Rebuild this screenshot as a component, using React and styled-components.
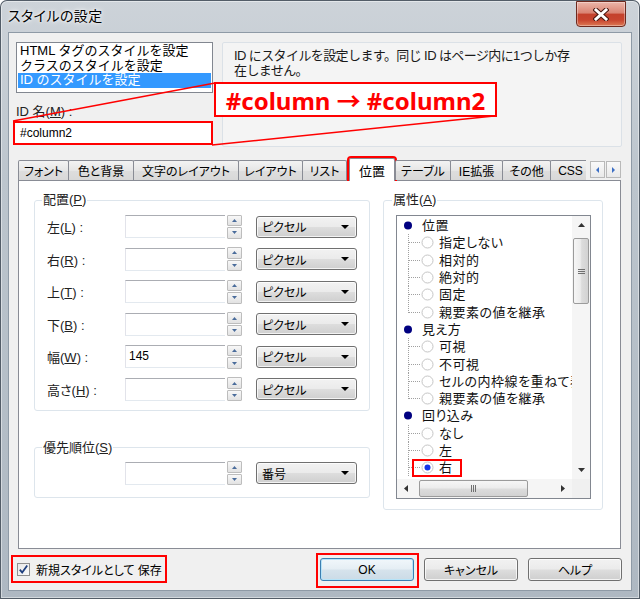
import React from 'react';
import styled, { createGlobalStyle, css } from 'styled-components';

const GlobalStyle = createGlobalStyle`
  html, body {
    margin: 0;
    padding: 0;
    background: #ffffff;
  }
  body {
    font-family: "Liberation Sans", "Noto Sans CJK JP", sans-serif;
    font-size: 12px;
    color: #000;
    font-feature-settings: "palt";
  }
  *, *::before, *::after {
    box-sizing: border-box;
  }
`;

const buttonFace = css`
  border: 1px solid #707070;
  border-radius: 3px;
  background: linear-gradient(#f2f2f2 0%, #ebebeb 48%, #dddddd 52%, #cfcfcf 100%);
  box-shadow: inset 0 0 0 1px rgba(255, 255, 255, 0.75);
`;

const tabs = [
  { label: 'フォント', w: 51 },
  { label: '色と背景', w: 65 },
  { label: '文字のレイアウト', w: 105 },
  { label: 'レイアウト', w: 64 },
  { label: 'リスト', w: 44 },
  { label: '位置', w: 46, selected: true },
  { label: 'テーブル', w: 55 },
  { label: 'IE拡張', w: 52 },
  { label: 'その他', w: 48 },
  { label: 'CSS', w: 40 },
];

const positionRows = [
  { label: '左', key: 'L' },
  { label: '右', key: 'R' },
  { label: '上', key: 'T' },
  { label: '下', key: 'B' },
  { label: '幅', key: 'W', value: '145' },
  { label: '高さ', key: 'H' },
];

const treeItems = [
  { cat: true, label: '位置' },
  { label: '指定しない' },
  { label: '相対的' },
  { label: '絶対的' },
  { label: '固定' },
  { label: '親要素の値を継承', last: true },
  { cat: true, label: '見え方' },
  { label: '可視' },
  { label: '不可視' },
  { label: 'セルの内枠線を重ねて表示' },
  { label: '親要素の値を継承', last: true },
  { cat: true, label: '回り込み' },
  { label: 'なし' },
  { label: '左' },
  { label: '右', checked: true, marked: true },
];

const Tri = ({ dir = 'down', color = '#000', w = 7, h = 4 }) => {
  const pts = {
    down: `0,0 ${w},0 ${w / 2},${h}`,
    up: `0,${h} ${w},${h} ${w / 2},0`,
    left: `${w},0 ${w},${h} 0,${h / 2}`,
    right: `0,0 0,${h} ${w},${h / 2}`,
  }[dir];
  return (
    <svg width={w} height={h} viewBox={`0 0 ${w} ${h}`}>
      <polygon points={pts} fill={color} />
    </svg>
  );
};

const Spinner = () => (
  <Spin>
    <SpinHalf><Tri dir="up" color="#4a6c9b" w={5} h={3} /></SpinHalf>
    <SpinHalf><Tri dir="down" color="#4a6c9b" w={5} h={3} /></SpinHalf>
  </Spin>
);

const Dropdown = ({ children }) => (
  <Select>
    <span>{children}</span>
    <Tri dir="down" w={8} h={4} />
  </Select>
);

const TreeRow = ({ item }) => {
  if (item.cat) {
    return (
      <TreeLine>
        <svg width="22" height="17" viewBox="0 0 22 17">
          <circle cx="11" cy="8.5" r="4" fill="#000080" />
        </svg>
        <TreeText $cat>{item.label}</TreeText>
      </TreeLine>
    );
  }
  return (
    <TreeLine>
      <svg width="24" height="17" viewBox="0 0 24 17">
        <line x1="11.5" y1="0" x2="11.5" y2={item.last ? 9 : 17} stroke="#a0a0a0" strokeDasharray="1 1" />
        <line x1="12" y1="8.5" x2="23" y2="8.5" stroke="#a0a0a0" strokeDasharray="1 1" />
      </svg>
      <OptionBody $marked={item.marked}>
        <svg width="13" height="13" viewBox="0 0 13 13">
          <circle cx="6.5" cy="6.5" r="5.5" fill="#fff" stroke="#c6c6c6" />
          {item.checked && <circle cx="6.5" cy="6.5" r="3" fill="#1436e8" />}
        </svg>
        <TreeText>{item.label}</TreeText>
      </OptionBody>
    </TreeLine>
  );
};

export default function App() {
  return (
    <>
      <GlobalStyle />
      <Window>
        <TitleBar>
          <Title>スタイルの設定</Title>
          <CloseButton>
            <svg width="16" height="13" viewBox="0 0 16 13">
              <path d="M3 2 L13 11 M13 2 L3 11" stroke="#4a1810" strokeWidth="5" strokeLinecap="square" />
              <path d="M3 2 L13 11 M13 2 L3 11" stroke="#fff" strokeWidth="3" strokeLinecap="square" />
            </svg>
          </CloseButton>
        </TitleBar>

        <Client>
          <TopRow>
            <LeftColumn>
              <ListBox>
                <ListItem>HTML タグのスタイルを設定</ListItem>
                <ListItem>クラスのスタイルを設定</ListItem>
                <ListItem $selected>ID のスタイルを設定</ListItem>
              </ListBox>
              <IdLabel>ID 名(<u>M</u>) :</IdLabel>
              <IdInput>#column2</IdInput>
            </LeftColumn>
            <Description>
              <DescLine>ID にスタイルを設定します。同じ ID はページ内に1つしか存</DescLine>
              <DescLine>在しません。</DescLine>
            </Description>
          </TopRow>

          <TabStrip>
            <TabList>
              {tabs.map((t, i) => (
                <Tab key={t.label} $w={t.w + (i > 0 && !t.selected ? 1 : 0)} $selected={t.selected} $first={i === 0}>
                  {t.label}
                </Tab>
              ))}
            </TabList>
            <TabArrows>
              <ArrowButton><Tri dir="left" color="#3d6fc4" w={3} h={6} /></ArrowButton>
              <ArrowButton><Tri dir="right" color="#3d6fc4" w={3} h={6} /></ArrowButton>
            </TabArrows>
          </TabStrip>

          <TabPanel>
            <LeftPane>
              <Group $w={336}>
                <GroupLegend>配置(<u>P</u>)</GroupLegend>
                <FieldRows>
                  {positionRows.map((r) => (
                    <FieldRow key={r.key}>
                      <FieldLabel>{r.label}(<u>{r.key}</u>) :</FieldLabel>
                      <NumberBox>{r.value}</NumberBox>
                      <Spinner />
                      <Dropdown>ピクセル</Dropdown>
                    </FieldRow>
                  ))}
                </FieldRows>
              </Group>
              <Group $w={336} $second>
                <GroupLegend>優先順位(<u>S</u>)</GroupLegend>
                <PriorityRow>
                  <FieldRow>
                    <FieldLabel />
                    <NumberBox />
                    <Spinner />
                    <Dropdown>番号</Dropdown>
                  </FieldRow>
                </PriorityRow>
              </Group>
            </LeftPane>

            <Group $w={220} $right>
              <GroupLegend>属性(<u>A</u>)</GroupLegend>
              <TreeBox>
                <TreeItems>
                  {treeItems.map((item, i) => (
                    <TreeRow key={i} item={item} />
                  ))}
                </TreeItems>
                <VScroll>
                  <ScrollArrow><Tri dir="up" color="#333" w={7} h={4} /></ScrollArrow>
                  <VTrack>
                    <VThumb>
                      <svg width="7" height="7" viewBox="0 0 7 7">
                        <path d="M0 1.5 H7 M0 3.5 H7 M0 5.5 H7" stroke="#707070" />
                      </svg>
                    </VThumb>
                  </VTrack>
                  <ScrollArrow><Tri dir="down" color="#333" w={7} h={4} /></ScrollArrow>
                </VScroll>
                <HScroll>
                  <ScrollArrow $h><Tri dir="left" color="#333" w={4} h={7} /></ScrollArrow>
                  <HTrack>
                    <HThumb>
                      <svg width="7" height="7" viewBox="0 0 7 7">
                        <path d="M1.5 0 V7 M3.5 0 V7 M5.5 0 V7" stroke="#707070" />
                      </svg>
                    </HThumb>
                  </HTrack>
                  <ScrollArrow $h><Tri dir="right" color="#333" w={4} h={7} /></ScrollArrow>
                </HScroll>
                <ScrollCorner />
              </TreeBox>
            </Group>
          </TabPanel>

          <BottomBar>
            <SaveOption>
              <CheckBox>
                <svg width="11" height="11" viewBox="0 0 11 11">
                  <path d="M1.8 5.6 L4.2 8.6 L9.2 1.6" fill="none" stroke="#1f3f7e" strokeWidth="1.8" />
                </svg>
              </CheckBox>
              新規スタイルとして 保存
            </SaveOption>
            <DialogButton $default $marked>OK</DialogButton>
            <DialogButton>キャンセル</DialogButton>
            <DialogButton>ヘルプ</DialogButton>
          </BottomBar>
        </Client>

        <Leaders width="640" height="599" viewBox="0 0 640 599">
          <line x1="13" y1="121" x2="215" y2="83" stroke="#ff0000" strokeWidth="1.4" />
          <line x1="212" y1="145" x2="494" y2="116" stroke="#ff0000" strokeWidth="1.4" />
        </Leaders>
        <Callout>#column → #column2</Callout>
      </Window>
    </>
  );
}

const Window = styled.div`
  position: relative;
  width: 640px;
  height: 599px;
  display: flex;
  flex-direction: column;
  padding: 0 8px 8px;
  border-radius: 7px 7px 0 0;
  background: linear-gradient(180deg, #cdd3d9 0%, #bcc5cd 30%, #aeb8c2 100%);
  box-shadow: inset 0 0 0 1px #535d68, inset 0 0 0 2px rgba(255, 255, 255, 0.45);
  overflow: hidden;
`;

const TitleBar = styled.div`
  height: 32px;
  display: flex;
  align-items: flex-start;
  justify-content: space-between;
`;

const Title = styled.div`
  padding-top: 6px;
  font-size: 14px;
  line-height: 20px;
  letter-spacing: 0.4px;
  text-shadow: 0 0 6px #ffffff, 0 0 3px #ffffff;
`;

const CloseButton = styled.div`
  width: 50px;
  height: 26px;
  margin: 1px 6px 0 0;
  display: flex;
  align-items: center;
  justify-content: center;
  border: 1px solid #6e2a1f;
  border-radius: 0 0 4px 4px;
  background: linear-gradient(#ecb6aa 0%, #da8473 45%, #c4412c 52%, #c8452f 75%, #dc7a55 100%);
  box-shadow: inset 0 0 0 1px rgba(255, 255, 255, 0.35);
`;

const Client = styled.div`
  flex: 1;
  display: flex;
  flex-direction: column;
  padding: 9px 9px 9px 7px;
  background: #f0f0f0;
  border: 1px solid #8e9aa6;
`;

const TopRow = styled.div`
  display: grid;
  grid-template-columns: 197px 1fr;
  column-gap: 9px;
  height: 105px;
`;

const LeftColumn = styled.div`
  display: flex;
  flex-direction: column;
`;

const ListBox = styled.div`
  height: 51px;
  padding: 1px 1px 0;
  background: #fff;
  border: 1px solid #828790;
`;

const ListItem = styled.div`
  height: 14.5px;
  padding-left: 2px;
  font-size: 13px;
  line-height: 14.5px;
  font-feature-settings: normal;
  white-space: nowrap;
  color: ${(p) => (p.$selected ? '#fff' : '#000')};
  background: ${(p) => (p.$selected ? '#3399ff' : 'transparent')};
`;

const IdLabel = styled.div`
  margin-top: 11px;
  font-size: 13px;
  line-height: 16px;
  color: #222;
`;

const IdInput = styled.div`
  margin: 1px 0 0 -3px;
  width: 200px;
  height: 24px;
  padding-left: 5px;
  display: flex;
  align-items: center;
  background: #fff;
  border: 2px solid #ff0000;
  font-size: 12px;
`;

const Description = styled.div`
  display: flex;
  flex-direction: column;
  padding: 5px 11px;
  background: #f4f4f4;
  border: 1px solid #dbe1e7;
  border-radius: 2px;
`;

const DescLine = styled.span`
  font-size: 13px;
  line-height: 15px;
  letter-spacing: -0.6px;
  font-feature-settings: normal;
  white-space: nowrap;
  color: #1a1a1a;
`;

const TabStrip = styled.div`
  position: relative;
  z-index: 1;
  display: flex;
  align-items: flex-end;
  height: 26px;
  margin: 8px 1px -1px 2px;
`;

const TabList = styled.div`
  flex: 1;
  height: 100%;
  display: flex;
  align-items: flex-end;
  overflow: hidden;
`;

const Tab = styled.div`
  flex: none;
  width: ${(p) => p.$w}px;
  display: flex;
  align-items: center;
  justify-content: center;
  font-size: 12px;
  white-space: nowrap;
  border: 1px solid #898c95;
  border-bottom: none;
  border-radius: 2px 2px 0 0;
  ${(p) =>
    p.$selected
      ? css`
          height: 23px;
          margin: 0 1px 0 2px;
          background: #fff;
          outline: 2px solid #ff0000;
          font-size: 13px;
        `
      : css`
          height: 20px;
          margin-bottom: 1px;
          margin-left: ${p.$first ? 0 : -1}px;
          background: linear-gradient(#f3f3f3, #e6e6e6 50%, #dedede 50%, #d8d8d8);
        `}
`;

const TabArrows = styled.div`
  display: flex;
  margin: 0 0 3px 4px;
`;

const ArrowButton = styled.div`
  width: 15px;
  height: 17px;
  display: flex;
  align-items: center;
  justify-content: center;
  border: 1px solid #b9b9b9;
  background: linear-gradient(#fafafa, #e9e9e9);
  & + & {
    margin-left: 1px;
  }
`;

const TabPanel = styled.div`
  flex: 1;
  display: flex;
  align-items: flex-start;
  gap: 13px;
  margin: 0 1px 0 2px;
  padding: 11px 0 0 15px;
  background: #fff;
  border: 1px solid #898c95;
`;

const LeftPane = styled.div`
  display: flex;
  flex-direction: column;
`;

const Group = styled.fieldset`
  min-width: 0;
  width: ${(p) => p.$w}px;
  margin: ${(p) => (p.$second ? '29px 0 0' : '0')};
  padding: ${(p) => (p.$right ? '7px 8px 10px 8px' : p.$second ? '6px 8px 12px 7px' : '7px 8px 9px 7px')};
  border: 1px solid #dde5ec;
  border-radius: 3px;
`;

const GroupLegend = styled.legend`
  padding: 0 1px;
  font-size: 13px;
  line-height: 16px;
  color: #222;
`;

const FieldRows = styled.div`
  display: grid;
  row-gap: 9.6px;
`;

const PriorityRow = styled.div`
  display: grid;
`;

const FieldRow = styled.div`
  display: flex;
  align-items: center;
  height: 23px;
  margin-left: 5px;
`;

const FieldLabel = styled.span`
  width: 78px;
  flex: none;
  font-size: 13px;
  color: #222;
`;

const NumberBox = styled.div`
  width: 100px;
  height: 23px;
  padding: 2px 3px 0;
  background: #fff;
  border-top: 1px solid #abadb3;
  border-left: 1px solid #e2e3ea;
  border-bottom: 1px solid #e3e9ef;
  font-size: 12px;
  line-height: 16px;
`;

const Spin = styled.div`
  width: 15px;
  height: 24px;
  margin-left: 2px;
  display: flex;
  flex-direction: column;
  gap: 1px;
`;

const SpinHalf = styled.div`
  flex: 1;
  display: flex;
  align-items: center;
  justify-content: center;
  border: 1px solid #bdbdbd;
  border-radius: 1px;
  background: linear-gradient(#f8f8f8, #e2e2e2);
`;

const Select = styled.div`
  width: 101px;
  height: 22px;
  margin-left: 14px;
  padding: 0 7px 0 5px;
  display: flex;
  align-items: center;
  justify-content: space-between;
  font-size: 12px;
  ${buttonFace}
`;

const TreeBox = styled.div`
  width: 195px;
  height: 284px;
  margin-left: 4px;
  display: grid;
  grid-template-columns: 1fr 18px;
  grid-template-rows: 1fr 19px;
  background: #fff;
  border: 1px solid #828790;
`;

const TreeItems = styled.div`
  overflow: hidden;
  padding-top: 1px;
`;

const TreeLine = styled.div`
  height: 17.3px;
  display: flex;
  align-items: center;
  white-space: nowrap;
  & > * {
    flex: none;
  }
`;

const TreeText = styled.span`
  margin-left: ${(p) => (p.$cat ? 3 : 5)}px;
  font-size: 13px;
  letter-spacing: 0.5px;
  line-height: 17px;
  color: #111;
`;

const OptionBody = styled.span`
  position: relative;
  display: flex;
  align-items: center;
  height: 100%;
  ${(p) =>
    p.$marked &&
    css`
      &::after {
        content: '';
        position: absolute;
        left: -9px;
        right: -9px;
        top: 0;
        bottom: -1px;
        border: 2px solid #ff0000;
      }
    `}
`;

const VScroll = styled.div`
  display: flex;
  flex-direction: column;
  background: #f5f5f5;
`;

const HScroll = styled.div`
  display: flex;
  background: #f5f5f5;
`;

const ScrollArrow = styled.div`
  flex: none;
  ${(p) => (p.$h ? 'width: 18px;' : 'height: 18px;')}
  display: flex;
  align-items: center;
  justify-content: center;
`;

const VTrack = styled.div`
  flex: 1;
  padding: 4px 1px 0;
`;

const HTrack = styled.div`
  flex: 1;
  display: flex;
  padding: 1px 0 1px 4px;
`;

const thumbFace = css`
  display: flex;
  align-items: center;
  justify-content: center;
  border: 1px solid #9b9b9b;
  border-radius: 2px;
`;

const VThumb = styled.div`
  height: 66px;
  ${thumbFace}
  background: linear-gradient(90deg, #f6f6f6, #ececec 45%, #dcdcdc 55%, #d2d2d2);
`;

const HThumb = styled.div`
  width: 109px;
  ${thumbFace}
  background: linear-gradient(#f6f6f6, #ececec 45%, #dcdcdc 55%, #d2d2d2);
`;

const ScrollCorner = styled.div`
  background: #f0f0f0;
`;

const BottomBar = styled.div`
  display: flex;
  align-items: stretch;
  height: 23px;
  margin-top: 9px;
`;

const SaveOption = styled.div`
  position: relative;
  display: flex;
  align-items: center;
  gap: 6px;
  margin-left: 1px;
  font-size: 12px;
  &::after {
    content: '';
    position: absolute;
    left: -6px;
    right: -5px;
    top: -3px;
    bottom: -2px;
    border: 2px solid #ff0000;
  }
`;

const CheckBox = styled.span`
  width: 13px;
  height: 13px;
  display: flex;
  align-items: center;
  justify-content: center;
  border: 1px solid #8f8f8f;
  background: linear-gradient(135deg, #e8e8e8, #fafafa);
`;

const DialogButton = styled.div`
  position: relative;
  width: 94px;
  display: flex;
  align-items: center;
  justify-content: center;
  margin-left: ${(p) => (p.$default ? 'auto' : '10px')};
  font-size: 12px;
  ${buttonFace}
  ${(p) =>
    p.$default &&
    css`
      border-color: #3c7fb1;
      background: linear-gradient(#f1f7fb 0%, #e5eef4 48%, #d6e3ec 52%, #cbdbe6 100%);
      box-shadow: inset 0 0 0 1px #b6e3f8;
    `}
  ${(p) =>
    p.$marked &&
    css`
      &::after {
        content: '';
        position: absolute;
        left: -5px;
        right: -6px;
        top: -6px;
        bottom: -8px;
        border: 2px solid #ff0000;
      }
    `}
`;

const Leaders = styled.svg`
  position: absolute;
  left: 0;
  top: 0;
  z-index: 5;
  pointer-events: none;
`;

const Callout = styled.div`
  position: absolute;
  left: 214px;
  top: 82px;
  z-index: 6;
  width: 283px;
  height: 35px;
  display: flex;
  align-items: center;
  justify-content: center;
  border: 2px solid #ff0000;
  background: #fff;
  color: #ff0000;
  font-family: "Noto Sans", "Noto Sans CJK JP", sans-serif;
  font-weight: 700;
  font-size: 24px;
  white-space: nowrap;
`;
